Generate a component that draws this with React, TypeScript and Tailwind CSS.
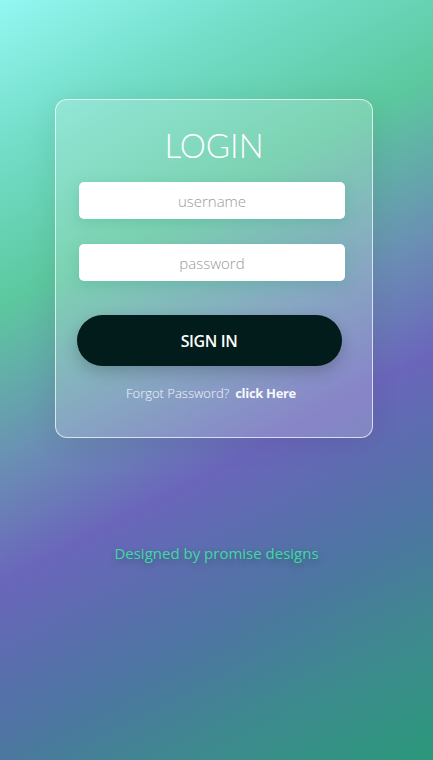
import { useState } from 'react';

export default function App() {
  const [username, setUsername] = useState('');
  const [password, setPassword] = useState('');

  return (
    <div
      className="min-h-screen w-full bg-[linear-gradient(152deg,#93f7f2_0%,#72dcc6_16%,#5cc89f_31%,#6a8fb4_47%,#6a66bb_59%,#4f74a4_74%,#3d8a8e_87%,#2a987a_100%)] pt-[99px] pb-10"
      style={{ fontFamily: '"Open Sans", Lato, sans-serif' }}
    >
      <div className="ml-[55px] w-[318px] h-[339px] rounded-[12px] border border-white/70 bg-white/20 shadow-[0_4px_30px_rgba(0,0,0,0.08)] flex flex-col items-center">
        <h1 className="mt-[25px] text-[33px] leading-[40px] font-light text-white" style={{ fontFamily: 'Lato, sans-serif' }}>
          LOGIN
        </h1>

        <div className="mt-[17px] w-[266px] flex flex-col gap-[25px] -ml-[4px]">
          <input
            type="text"
            value={username}
            onChange={(e) => setUsername(e.target.value)}
            placeholder="username"
            className="h-[37px] w-full rounded-[5px] bg-white text-center text-[15px] font-light text-gray-700 outline-none placeholder:text-[#9a9a9a] shadow-[0_4px_14px_rgba(40,160,130,0.25)]"
          />
          <input
            type="password"
            value={password}
            onChange={(e) => setPassword(e.target.value)}
            placeholder="password"
            className="h-[37px] w-full rounded-[5px] bg-white text-center text-[15px] font-light text-gray-700 outline-none placeholder:text-[#9a9a9a] shadow-[0_4px_14px_rgba(40,160,130,0.25)]"
          />
        </div>

        <button
          type="button"
          className="mt-[34px] -ml-[10px] h-[51px] w-[265px] rounded-full bg-[#021b1b] text-[16px] font-semibold tracking-tight text-white shadow-[0_6px_16px_rgba(0,0,0,0.2)]"
        >
          SIGN IN
        </button>

        <p className="mt-[18px] -ml-[6px] text-[13px] text-white/90">
          <span className="font-light">Forgot Password?</span>
          <a href="#" className="ml-[6px] font-bold tracking-tight text-white/95">click Here</a>
        </p>
      </div>

      <p className="mt-[104px] text-center text-[15px] text-[#3fd9a4] [text-shadow:0_3px_6px_rgba(20,80,60,0.45)]">
        Designed by promise designs
      </p>
    </div>
  );
}
